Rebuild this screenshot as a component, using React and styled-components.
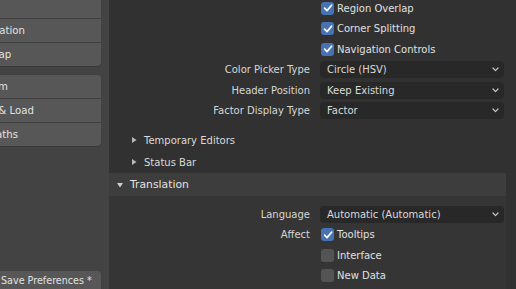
import React from "react";
import styled, { createGlobalStyle } from "styled-components";

const GlobalStyle = createGlobalStyle`
  html, body {
    margin: 0;
    padding: 0;
    background: #303030;
    overflow: hidden;
  }
  body {
    font-family: "DejaVu Sans", "Liberation Sans", sans-serif;
    font-size: 10px;
    color: #d4d4d4;
  }
`;

const Screen = styled.div`
  display: flex;
  width: 516px;
  height: 289px;
  overflow: hidden;
`;

const Sidebar = styled.div`
  width: 109px;
  flex: none;
  background: #434343;
  display: flex;
  flex-direction: column;
  overflow: hidden;
`;

const NavGroup = styled.div`
  margin-left: -36px;
  margin-top: ${(p) => p.top || 0}px;
  width: 137px;
  background: #575757;
  border-radius: 4px;
  overflow: hidden;
  box-shadow: 0 1px 0 #393939;
`;

const NavItem = styled.div`
  height: 23px;
  display: flex;
  align-items: center;
  padding-left: 6px;
  font-size: 10.2px;
  color: #e2e2e2;
  & + & {
    border-top: 1px solid #404040;
  }
`;

const SaveButton = styled.div`
  margin-top: auto;
  margin-bottom: -8px;
  margin-left: -6px;
  width: 107px;
  height: 26px;
  box-sizing: border-box;
  padding: 4px 0 0 7px;
  background: #575757;
  border-radius: 4px;
  font-size: 9.6px;
  color: #e2e2e2;
`;

const Main = styled.div`
  flex: 1;
  display: flex;
  flex-direction: column;
  background: #313131;
`;

const Body = styled.div`
  display: flex;
  flex-direction: column;
  padding: ${(p) => p.pad || "0"};
`;

const PropRow = styled.div`
  display: grid;
  grid-template-columns: 201px 184px;
  column-gap: 10px;
  align-items: center;
  height: 20.5px;
`;

const Label = styled.div`
  text-align: right;
  color: #d6d6d6;
`;

const CheckLine = styled.div`
  display: flex;
  align-items: center;
  gap: 3px;
  color: #e0e0e0;
`;

const Box = styled.div`
  width: 13px;
  height: 13px;
  border-radius: 3px;
  background: ${(p) => (p.on ? "#4772b3" : "#545454")};
  display: flex;
  align-items: center;
  justify-content: center;
  margin-left: 1px;
`;

const Select = styled.div`
  height: 17px;
  background: #282828;
  border-radius: 4px;
  display: flex;
  align-items: center;
  justify-content: space-between;
  padding: 0 5px 0 7px;
  color: #dadada;
`;

const SubRow = styled.div`
  height: 22px;
  display: flex;
  align-items: center;
  padding-left: 22px;
  gap: 7px;
  color: #dadada;
`;

const PanelHeader = styled.div`
  height: 23px;
  margin-right: 10px;
  background: #3d3d3d;
  display: flex;
  align-items: center;
  padding-left: 8px;
  gap: 7px;
  font-size: 10.8px;
  color: #e2e2e2;
`;

const TranslationBody = styled(Body)`
  background: #353535;
  margin-right: 10px;
  flex: 1;
`;

const Check = () => (
  <svg width="10" height="10" viewBox="0 0 10 10">
    <path d="M1.6 5.2 L4 7.6 L8.6 2.2" fill="none" stroke="#fff" strokeWidth="1.7" strokeLinecap="round" strokeLinejoin="round" />
  </svg>
);

const Chevron = () => (
  <svg width="7" height="5" viewBox="0 0 7 5">
    <path d="M1 1 L3.5 3.6 L6 1" fill="none" stroke="#c8c8c8" strokeWidth="1.2" strokeLinecap="round" strokeLinejoin="round" />
  </svg>
);

const Arrow = ({ open }) => (
  <svg width="6" height="6" viewBox="0 0 6 6">
    {open ? <path d="M0 1 L6 1 L3 5.5 Z" fill="#cfcfcf" /> : <path d="M1 0 L5.5 3 L1 6 Z" fill="#b8b8b8" />}
  </svg>
);

const CheckProp = ({ label, text, on }) => (
  <PropRow>
    <Label>{label}</Label>
    <CheckLine>
      <Box on={on}>{on && <Check />}</Box>
      {text}
    </CheckLine>
  </PropRow>
);

const SelectProp = ({ label, value }) => (
  <PropRow>
    <Label>{label}</Label>
    <Select>
      {value}
      <Chevron />
    </Select>
  </PropRow>
);

export default function App() {
  return (
    <>
      <GlobalStyle />
      <Screen>
        <Sidebar>
          <NavGroup top={-5}>
            <NavItem>Input</NavItem>
            <NavItem>Navigation</NavItem>
            <NavItem>Keymap</NavItem>
          </NavGroup>
          <NavGroup top={9}>
            <NavItem>System</NavItem>
            <NavItem>Save &amp; Load</NavItem>
            <NavItem>File Paths</NavItem>
          </NavGroup>
          <SaveButton>Save Preferences *</SaveButton>
        </Sidebar>
        <Main>
          <Body pad="0 0 8px 0" style={{ marginTop: -2 }}>
            <CheckProp text="Region Overlap" on />
            <CheckProp text="Corner Splitting" on />
            <CheckProp text="Navigation Controls" on />
            <SelectProp label="Color Picker Type" value="Circle (HSV)" />
            <SelectProp label="Header Position" value="Keep Existing" />
            <SelectProp label="Factor Display Type" value="Factor" />
          </Body>
          <SubRow>
            <Arrow />
            Temporary Editors
          </SubRow>
          <SubRow>
            <Arrow />
            Status Bar
          </SubRow>
          <PanelHeader>
            <Arrow open />
            Translation
          </PanelHeader>
          <TranslationBody pad="8px 0 0 0">
            <SelectProp label="Language" value="Automatic (Automatic)" />
            <CheckProp label="Affect" text="Tooltips" on />
            <CheckProp text="Interface" />
            <CheckProp text="New Data" />
          </TranslationBody>
        </Main>
      </Screen>
    </>
  );
}
